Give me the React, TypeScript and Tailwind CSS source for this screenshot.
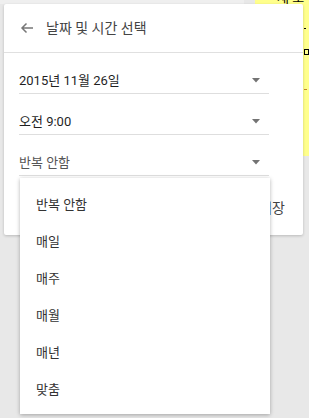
import React from 'react';

const font = { fontFamily: 'Roboto, "Noto Sans CJK KR", sans-serif' };

const options = ['반복 안함', '매일', '매주', '매월', '매년', '맞춤'];

const Caret: React.FC = () => (
    <svg width="8" height="5" viewBox="0 0 8 5" className="shrink-0">
        <path d="M0 0 L8 0 L4 4.5 Z" fill="#737373" />
    </svg>
);

const Field: React.FC<{ label: string; muted?: boolean }> = ({ label, muted }) => (
    <div className="h-[41px] flex items-end justify-between pb-[4px] pr-[9px] border-b border-[#dedede]">
        <span className={`text-[13px] leading-[16px] ${muted ? 'text-[#555]' : 'text-[#1f1f1f]'}`}>{label}</span>
        <div className="mb-[6px]">
            <Caret />
        </div>
    </div>
);

const App: React.FC = () => {
    return (
        <div className="relative w-[309px] h-[418px] overflow-hidden bg-[#e8e8e8]" style={font}>
            {/* top strip of the window behind */}
            <div className="absolute left-0 top-0 w-[244px] h-[4px] bg-[#efefef]" />

            {/* sticky note behind the dialog */}
            <div className="absolute left-[255px] top-0 w-[60px] h-[156px] bg-[#ffff8c]">
                <div className="absolute left-[22px] top-[-9px] text-[13px] text-black leading-[14px]">새 노</div>
                <div className="absolute left-[49px] top-[28px] w-[2px] h-[1px] bg-black" />
                <div className="absolute left-[49px] top-[49px] w-[5px] h-[6px] border border-black" />
                <div className="absolute left-[49px] top-[89px] w-[3px] h-[1px] bg-[#c58a2b]" />
            </div>

            {/* dialog */}
            <div className="absolute left-[4px] top-[4px] w-[299px] h-[231px] bg-white rounded-[2px] shadow-[0_1px_3px_rgba(0,0,0,0.2)] flex flex-col">
                <div className="h-[49px] flex items-center gap-[12px] pl-[16px] border-b border-[#e0e0e0]">
                    <svg width="14" height="14" viewBox="0 0 14 14">
                        <path d="M13 7 H2 M6.5 2.5 L2 7 L6.5 11.5" stroke="#777" strokeWidth="1.5" fill="none" />
                    </svg>
                    <span className="text-[14px] text-[#444] leading-[16px]">날짜 및 시간 선택</span>
                </div>
                <div className="pl-[15px] pr-[34px]">
                    <Field label="2015년 11월 26일" />
                    <Field label="오전 9:00" />
                    <Field label="반복 안함" muted />
                </div>
                <div className="flex-1 flex justify-end items-center pr-[18px] pt-[6px]">
                    <span className="text-[14px] text-[#444]">저장</span>
                </div>
            </div>

            {/* repeat dropdown menu */}
            <div className="absolute left-[20px] top-[178px] w-[250px] bg-white pt-[8px] pb-[6px] shadow-[0_1px_4px_rgba(0,0,0,0.3)]">
                {options.map(o => (
                    <div key={o} className="h-[37px] flex items-center pl-[16px] text-[13px] text-[#333]">
                        {o}
                    </div>
                ))}
            </div>
        </div>
    );
};

export default App;
